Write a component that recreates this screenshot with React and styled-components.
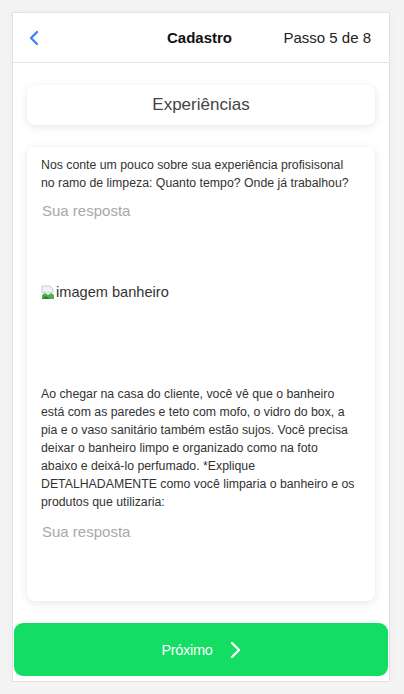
import React from "react";
import styled, { createGlobalStyle } from "styled-components";

const GlobalStyle = createGlobalStyle`
  html, body {
    margin: 0;
    padding: 0;
    background: #f4f4f4;
    font-family: "Liberation Sans", Arial, sans-serif;
  }
`;

const Frame = styled.div`
  box-sizing: border-box;
  margin: 12px 0 0 12px;
  width: 378px;
  height: 670px;
  background: #fff;
  border: 1px solid #e2e2e2;
  box-shadow: 0 0 10px rgba(0, 0, 0, 0.04);
  display: flex;
  flex-direction: column;
`;

const Header = styled.div`
  height: 49px;
  flex-shrink: 0;
  border-bottom: 1px solid #e4e4e4;
  display: grid;
  grid-template-columns: 1fr auto 1fr;
  align-items: center;
  padding: 0 18px 0 15px;
`;

const BackButton = styled.button`
  justify-self: start;
  background: none;
  border: none;
  padding: 0;
  display: flex;
  align-items: center;
  cursor: pointer;
`;

const HeaderTitle = styled.div`
  font-size: 15px;
  font-weight: 700;
  color: #111;
`;

const Step = styled.div`
  justify-self: end;
  font-size: 15px;
  color: #222;
`;

const Body = styled.div`
  flex: 1;
  display: flex;
  flex-direction: column;
  padding: 22px 14px 0 14px;
  gap: 22px;
`;

const SectionTitle = styled.div`
  height: 40px;
  border-radius: 8px;
  box-shadow: 0 2px 8px rgba(0, 0, 0, 0.1);
  display: flex;
  align-items: center;
  justify-content: center;
  font-size: 17px;
  color: #444;
`;

const Card = styled.div`
  height: 454px;
  box-sizing: border-box;
  border-radius: 8px;
  box-shadow: 0 2px 10px rgba(0, 0, 0, 0.1);
  padding: 9px 10px 0 14px;
  display: flex;
  flex-direction: column;
`;

const Question = styled.p`
  margin: 0;
  font-size: 12.3px;
  line-height: 18px;
  color: #333;
`;

const Answer = styled.textarea`
  border: none;
  outline: none;
  resize: none;
  font-family: "Liberation Sans", Arial, sans-serif;
  font-size: 15px;
  color: #333;
  padding: 2px 1px;
  margin: ${(p) => p.$top}px 0 0 0;
  height: 70px;
  &::placeholder {
    color: #a8a8a8;
  }
`;

const Picture = styled.div`
  display: flex;
  align-items: center;
  gap: 1px;
  font-size: 14.6px;
  color: #333;
  height: 18px;
  margin: 9px 0 84px 0;
`;

const Footer = styled.div`
  padding: 22px 0 5px 1px;
`;

const NextButton = styled.button`
  width: calc(100% - 1px);
  height: 53px;
  border: none;
  border-radius: 9px;
  background: #13dd63;
  color: #fff;
  font-family: "Liberation Sans", Arial, sans-serif;
  font-size: 14.5px;
  letter-spacing: -0.3px;
  display: flex;
  align-items: center;
  justify-content: center;
  gap: 16px;
  padding: 0;
  cursor: pointer;
`;

const BrokenImage = () => (
  <svg width="14" height="16" viewBox="0 0 14 16">
    <path d="M1 2h8l3 3v3l-2 1-2-1-2 1-2-1-3 1z" fill="#eef2f7" stroke="#b9c3cf" strokeWidth="0.8" />
    <path d="M1 11l3-2 3 2 3-2 3 2v4H1z" fill="#4caf50" />
    <path d="M1 15l4-3 4 3z" fill="#2e7d32" />
  </svg>
);

const lines = (list) =>
  list.map((l, i) => (
    <React.Fragment key={i}>
      {l}
      {i < list.length - 1 && <br />}
    </React.Fragment>
  ));

const q1 = [
  "Nos conte um pouco sobre sua experiência profisisonal",
  "no ramo de limpeza: Quanto tempo? Onde já trabalhou?",
];

const q2 = [
  "Ao chegar na casa do cliente, você vê que o banheiro",
  "está com as paredes e teto com mofo, o vidro do box, a",
  "pia e o vaso sanitário também estão sujos. Você precisa",
  "deixar o banheiro limpo e organizado como na foto",
  "abaixo e deixá-lo perfumado. *Explique",
  "DETALHADAMENTE como você limparia o banheiro e os",
  "produtos que utilizaria:",
];

export default function App() {
  return (
    <>
      <GlobalStyle />
      <Frame>
        <Header>
          <BackButton aria-label="Voltar">
            <svg width="12" height="16" viewBox="0 0 12 16">
              <path d="M9 2L3 8l6 6" fill="none" stroke="#3f83f0" strokeWidth="2.4" strokeLinecap="round" strokeLinejoin="round" />
            </svg>
          </BackButton>
          <HeaderTitle>Cadastro</HeaderTitle>
          <Step>Passo 5 de 8</Step>
        </Header>
        <Body>
          <SectionTitle>Experiências</SectionTitle>
          <Card>
            <Question>{lines(q1)}</Question>
            <Answer $top={8} placeholder="Sua resposta" />
            <Picture>
              <BrokenImage />
              imagem banheiro
            </Picture>
            <Question>{lines(q2)}</Question>
            <Answer $top={10} placeholder="Sua resposta" />
          </Card>
        </Body>
        <Footer>
          <NextButton>
            Próximo
            <svg width="12" height="18" viewBox="0 0 12 18">
              <path d="M3 2l7 7-7 7" fill="none" stroke="#fff" strokeWidth="2.4" strokeLinecap="round" strokeLinejoin="round" />
            </svg>
          </NextButton>
        </Footer>
      </Frame>
    </>
  );
}
